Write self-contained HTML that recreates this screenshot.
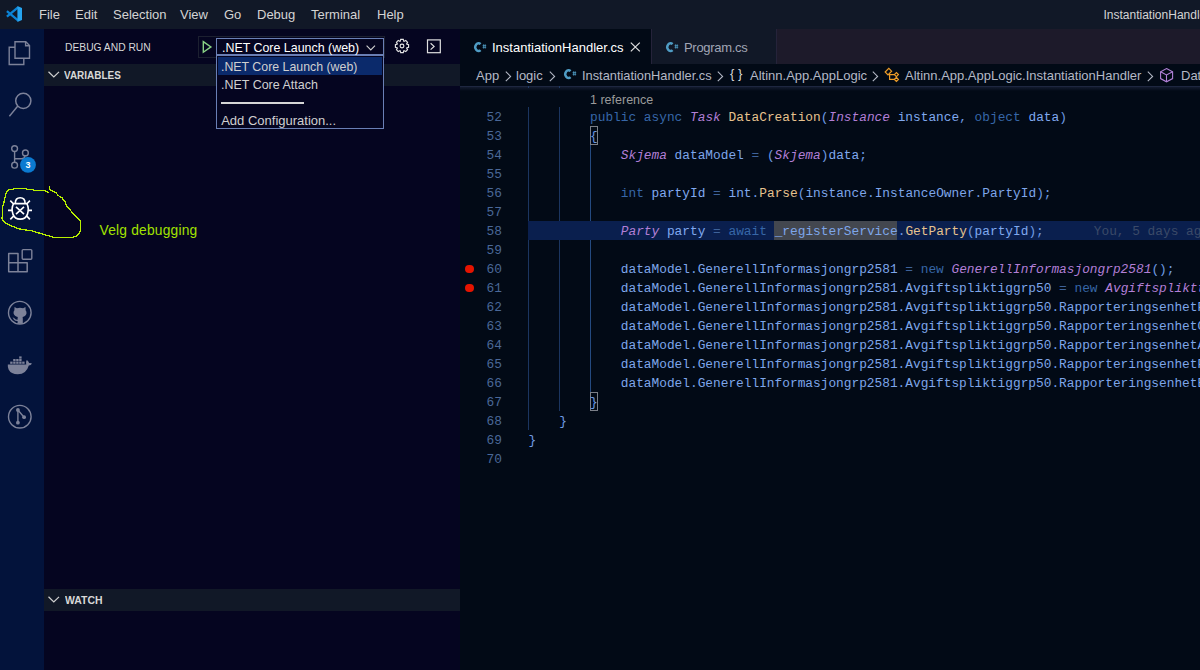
<!DOCTYPE html>
<html><head><meta charset="utf-8">
<style>
*{margin:0;padding:0;box-sizing:border-box}
html,body{width:1200px;height:670px;overflow:hidden;background:#03060f;font-family:"Liberation Sans",sans-serif}
.abs{position:absolute}
svg{position:absolute;overflow:visible}
#title{left:0;top:0;width:1200px;height:29px;background:#111827}
.menu{position:absolute;top:7px;font-size:13px;color:#d4d4d4;line-height:15px;white-space:nowrap}
#act{left:0;top:29px;width:44px;height:641px;background:#03133b}
#side{left:44px;top:29px;width:416px;height:641px;background:#050520}
.sech{position:absolute;left:0;width:416px;height:22px;background:#111827}
.sech span{position:absolute;left:20px;top:5px;font-size:11px;font-weight:bold;color:#d8d8d8;line-height:13px}
#editor{left:460px;top:29px;width:740px;height:641px;background:#020a16;overflow:hidden}
#tabs{left:0;top:0;width:740px;height:35px;background:#1d1a2a}
.tab{position:absolute;top:0;height:35px;font-size:13px;line-height:15px;white-space:nowrap}
#crumbs{left:0;top:35px;width:740px;height:22px;background:#020a16;font-size:13px;color:#b4b9c6;white-space:nowrap}
#crumbs span{position:absolute;top:4px;line-height:15px}
.ddi{position:absolute;left:4.2px;font-size:13px;line-height:15px;color:#d0d0d0;white-space:nowrap}
.ln{position:absolute;margin-top:1px;left:0;width:42px;text-align:right;font-family:"Liberation Mono",monospace;font-size:12.82px;line-height:19px;color:#4a6898;white-space:pre}
.cl{position:absolute;margin-top:1px;left:68.5px;font-family:"Liberation Mono",monospace;font-size:12.82px;line-height:19px;white-space:pre;color:#7ea6ea}
.k{color:#3767a8}
.t{color:#b27fd6;font-style:italic}
.f{color:#e7c38f}
.v{color:#80a9ef}
.p{color:#6f9be2}
.o{color:#3e6299}
.guide{position:absolute;width:1px;background:#1b3560}
</style></head><body>
<div id="title" class="abs">
  <svg style="left:0;top:0" width="30" height="29" viewBox="0 0 30 29"><path d="M6.9 11.1 L18 20.4 M18 7.4 L6.9 16.6" stroke="#0b83d6" stroke-width="2.3"/><path d="M17.4 5.9 L22 7.9 V19.9 L17.4 22 Z" fill="#25a4f0"/></svg>
  <div class="menu" style="left:39px">File</div>
  <div class="menu" style="left:75px">Edit</div>
  <div class="menu" style="left:113px">Selection</div>
  <div class="menu" style="left:180px">View</div>
  <div class="menu" style="left:224px">Go</div>
  <div class="menu" style="left:257px">Debug</div>
  <div class="menu" style="left:311px">Terminal</div>
  <div class="menu" style="left:377px">Help</div>
  <div class="menu" style="left:1103.5px;font-size:12px;top:7.5px">InstantiationHandler.cs - app - Visual Studio Code</div>
</div>

<div id="act" class="abs">
 <svg style="left:0;top:0" width="44" height="641" viewBox="0 29 44 641" fill="none" stroke="#7d8299" stroke-width="1.4">
  <!-- files -->
  <path d="M15 41.8 H25.8 L29.5 45.5 V58.2 H15 Z"/>
  <path d="M25.6 42 V45.7 H29.3"/>
  <path d="M15 47.2 H9.2 V64.5 H23.8 V58.2"/>
  <!-- search -->
  <circle cx="23.3" cy="100.8" r="7.6" stroke-width="1.5"/>
  <path d="M17.8 106 L9.4 116.2"/>
  <!-- scm -->
  <circle cx="14.6" cy="148.6" r="2.9"/>
  <circle cx="25.4" cy="152.9" r="2.9"/>
  <circle cx="14.6" cy="165.2" r="2.9"/>
  <path d="M14.6 151.5 V162.3"/>
  <path d="M25 155.8 Q24.6 158.8 21.6 158.8 H14.6"/>
  <!-- extensions -->
  <path d="M8.7 253.6 H18 V262.8 H27.2 V271.8 H8.7 Z M8.7 262.8 H18 V271.8" stroke-linejoin="round" stroke-width="1.5"/>
  <rect x="22.2" y="249.6" width="9.6" height="9.6" rx="1"/>
  <!-- github -->
  <circle cx="19.8" cy="312.7" r="11.3"/>
  <!-- git graph -->
  <circle cx="19.8" cy="416.7" r="11.3"/>
  <path d="M17.9 410 V422.7 M17.9 410 L24.1 417.2"/>
 </svg>
 <svg style="left:0;top:0" width="44" height="641" viewBox="0 29 44 641">
  <!-- github cat -->
  <path fill="#7d8299" d="M14.4 310.2 L14.5 306.9 L16.9 308.2 Q20 307.3 23.1 308.2 L25.5 306.9 L25.6 310.2 Q26.8 311.6 26.5 313.6 Q25.8 316.6 22.6 317 Q22.8 317.6 22.8 318.6 V323.8 H17.6 V320.9 Q15.2 321 13.8 319.4 Q13.2 318.4 12.5 317.6 Q13.4 317.4 14.3 318.3 Q15.6 319.8 17.6 319.8 V318.6 Q17.6 317.6 17.8 317 Q14.4 316.6 13.6 313.6 Q13.2 311.6 14.4 310.2 Z"/>
  <!-- docker -->
  <path fill="#7d8299" d="M7.8 364.6 H26.3 Q25.9 362.4 26.3 360.4 L27.2 360.3 Q28.6 361.6 29.1 363.1 Q30.8 362.6 32 363.4 Q31 365.2 28.8 365.4 Q26.4 374 17.8 374.2 Q11 374.2 8.6 369.4 Q7.6 367.4 7.8 364.6 Z"/>
  <rect fill="#7d8299" x="10.2" y="361.6" width="2.4" height="2.2"/>
  <rect fill="#7d8299" x="13.2" y="361.6" width="2.4" height="2.2"/>
  <rect fill="#7d8299" x="16.2" y="361.6" width="2.4" height="2.2"/>
  <rect fill="#7d8299" x="19.2" y="361.6" width="2.4" height="2.2"/>
  <rect fill="#7d8299" x="22.2" y="361.6" width="2.4" height="2.2"/>
  <rect fill="#7d8299" x="13.2" y="359" width="2.4" height="2.2"/>
  <rect fill="#7d8299" x="16.2" y="359" width="2.4" height="2.2"/>
  <rect fill="#7d8299" x="19.2" y="359" width="2.4" height="2.2"/>
  <rect fill="#7d8299" x="19.2" y="356.4" width="2.4" height="2.2"/>
  <!-- git graph dots -->
  <circle fill="#7d8299" cx="17.9" cy="410" r="1.9"/>
  <circle fill="#7d8299" cx="24.1" cy="417.2" r="1.9"/>
  <circle fill="#7d8299" cx="17.9" cy="422.7" r="1.9"/>
  <!-- badge -->
  <circle fill="#0b7ad1" cx="28" cy="164.8" r="7.9"/>
  <text x="28.1" y="168.2" fill="#ffffff" font-family="Liberation Sans" font-weight="bold" font-size="9" text-anchor="middle">3</text>
  <!-- debug bug -->
  <g fill="none" stroke="#ffffff" stroke-width="1.6">
   <path d="M15.3 203.4 C15.3 199.6 17.5 197.8 20.2 197.8 C22.9 197.8 25.1 199.6 25.1 203.4"/>
   <path d="M13.6 203.6 H26.8 C28.2 206 28.5 211 27.4 214.4 C26.2 217.6 23.6 219.1 20.2 219.1 C16.8 219.1 14.2 217.6 13 214.4 C11.9 211 12.2 206 13.6 203.6 Z"/>
   <path d="M16 206.8 L24 214.2 M24 206.8 L16 214.2"/>
   <path d="M10.3 200.6 L13.6 204 M29.9 200.6 L26.7 204 M8 210.4 H12.6 M27.8 210.4 H32 M10.3 219.4 L14 215.6 M29.9 219.4 L26.4 215.6"/>
  </g>
 </svg>
</div>

<div id="side" class="abs">
  <div class="abs" style="left:20.5px;top:12px;font-size:11px;color:#d8d8d8;line-height:13px;transform:scaleX(0.935);transform-origin:0 0;white-space:nowrap">DEBUG AND RUN</div>
  <div class="sech" style="top:35px"><span style="transform:scaleX(0.905);transform-origin:0 0">VARIABLES</span>
    <svg style="left:4px;top:7px" width="12" height="7" viewBox="0 0 12 7"><path d="M0.5 0.8 L5.8 6 L11 0.8" fill="none" stroke="#d0d0d0" stroke-width="1.2"/></svg>
  </div>
  <div class="sech" style="top:560px"><span style="left:20.5px;transform:scaleX(0.95);transform-origin:0 0">WATCH</span>
    <svg style="left:4px;top:7px" width="12" height="7" viewBox="0 0 12 7"><path d="M0.5 0.8 L5.8 6 L11 0.8" fill="none" stroke="#d0d0d0" stroke-width="1.2"/></svg>
  </div>
  <!-- debug toolbar -->
  <div class="abs" style="left:154px;top:7px;width:187px;height:22px;border:1px solid #1c2030"></div>
  <svg style="left:154px;top:7px" width="20" height="22" viewBox="0 0 20 22"><path d="M5.3 5.6 L12.9 10.9 L5.3 16.2 Z" fill="none" stroke="#89d185" stroke-width="1.4" stroke-linejoin="miter"/></svg>
  <div class="abs" style="left:172px;top:9px;width:168px;height:17px;border:1px solid #6a7fb5;background:#050520">
    <span class="abs" style="left:4.5px;top:1px;font-size:13px;line-height:15px;color:#ffffff;white-space:nowrap;transform:scaleX(0.955);transform-origin:0 0">.NET Core Launch (web)</span>
    <svg style="left:149px;top:6px" width="10" height="6" viewBox="0 0 10 6"><path d="M0.6 0.6 L4.8 5 L9 0.6" fill="none" stroke="#d0d0d0" stroke-width="1.1"/></svg>
  </div>
  <svg style="left:350.2px;top:8.8px" width="16" height="16" viewBox="0 0 16 16" fill="none" stroke="#e6e6e6" stroke-width="1.15">
   <path d="M6.13 3.36 L6.72 1.42 L9.28 1.42 L9.87 3.36 L9.95 3.40 L11.75 2.45 L13.55 4.25 L12.60 6.05 L12.64 6.13 L14.58 6.72 L14.58 9.28 L12.64 9.87 L12.60 9.95 L13.55 11.75 L11.75 13.55 L9.95 12.60 L9.87 12.64 L9.28 14.58 L6.72 14.58 L6.13 12.64 L6.05 12.60 L4.25 13.55 L2.45 11.75 L3.40 9.95 L3.36 9.87 L1.42 9.28 L1.42 6.72 L3.36 6.13 L3.40 6.05 L2.45 4.25 L4.25 2.45 L6.05 3.40 Z"/>
   <circle cx="8" cy="8" r="1.9"/>
  </svg>
  <svg style="left:382px;top:9px" width="16" height="16" viewBox="0 0 16 16" fill="none" stroke="#e0e0e0" stroke-width="1.2">
   <rect x="1.5" y="1.9" width="12.8" height="12.8"/>
   <path d="M4.6 5.2 L8.1 8.4 L4.6 11.6"/>
  </svg>
  <!-- dropdown -->
  <div class="abs" style="left:172px;top:26px;width:168px;height:74px;border:1px solid #6a7fb5;background:#050520">
    <div class="abs" style="left:1px;top:1px;width:164px;height:18px;background:#0b2a6b"></div>
    <div class="ddi" style="top:2.8px;transform:scaleX(0.95);transform-origin:0 0">.NET Core Launch (web)</div>
    <div class="ddi" style="top:21px;transform:scaleX(0.96);transform-origin:0 0">.NET Core Attach</div>
    <div class="abs" style="left:4px;top:46px;width:83px;height:2px;background:#d6d6d6"></div>
    <div class="ddi" style="top:57px">Add Configuration...</div>
  </div>
  <div class="abs" style="left:55.5px;top:192.5px;font-size:13.8px;line-height:17px;letter-spacing:0.2px;color:#a2e200;white-space:nowrap">Velg debugging</div>
</div>

<div id="editor" class="abs">
  <div id="tabs" class="abs">
    <div class="tab" style="left:0;width:191px;background:#020a16;color:#ffffff">
      <svg style="left:13.5px;top:12.5px" width="13" height="11" viewBox="0 0 13 11"><path d="M6.56 2.11 A3.2 3.9 0 1 0 6.56 8.09" fill="none" stroke="#4f9cc4" stroke-width="2.4"/><path d="M9.6 2.3 V6.6 M11.2 2.3 V6.6 M8.6 3.6 H12.2 M8.6 5.3 H12.2" stroke="#4f9cc4" stroke-width="0.8"/></svg>
      <span class="abs" style="left:32px;top:11px">InstantiationHandler.cs</span>
      <svg style="left:170px;top:13px" width="11" height="10" viewBox="0 0 11 10"><path d="M0.8 0.6 L9.8 9.4 M9.8 0.6 L0.8 9.4" stroke="#e0e0e0" stroke-width="1.2"/></svg>
    </div>
    <div class="tab" style="left:191px;width:126px;background:#111827;border-left:1px solid #25233a;border-right:1px solid #25233a;color:#a0a5b4">
      <svg style="left:13.5px;top:12.5px" width="13" height="11" viewBox="0 0 13 11"><path d="M6.56 2.11 A3.2 3.9 0 1 0 6.56 8.09" fill="none" stroke="#4f9cc4" stroke-width="2.4"/><path d="M9.6 2.3 V6.6 M11.2 2.3 V6.6 M8.6 3.6 H12.2 M8.6 5.3 H12.2" stroke="#4f9cc4" stroke-width="0.8"/></svg>
      <span class="abs" style="left:32px;top:11px;letter-spacing:-0.3px">Program.cs</span>
    </div>
  </div>
  <div class="guide" style="left:68px;top:57px;height:2px"></div>
  <div class="guide" style="left:99px;top:57px;height:2px"></div>
  <div class="guide" style="left:68px;top:78px;height:323px"></div>
  <div class="guide" style="left:99px;top:78px;height:304px"></div>
  <div class="guide" style="left:130px;top:116px;height:247px;background:#244a80"></div>
  <div class="abs" style="left:68px;top:192px;width:672px;height:19px;background:#0a1f4e"></div>
  <div class="abs" style="left:314px;top:192px;width:123px;height:19px;background:#43474f"></div>
  <div class="abs" style="left:130px;top:97px;width:8px;height:19px;border:1px solid #7b7f88"></div>
  <div class="abs" style="left:130px;top:363px;width:8px;height:19px;border:1px solid #7b7f88"></div>
  <div class="abs" style="left:5.4px;top:235.6px;width:8.6px;height:8.6px;border-radius:50%;background:#e51400"></div>
  <div class="abs" style="left:5.4px;top:254.6px;width:8.6px;height:8.6px;border-radius:50%;background:#e51400"></div>
  <div class="abs" style="left:130px;top:64px;font-size:12.5px;line-height:14px;color:#9a9a9a;white-space:nowrap">1 reference</div>
  <div class="ln" style="top:78px">52</div>
  <div class="cl" style="top:78px">        <span class="k">public</span> <span class="k">async</span> <span class="t">Task</span> <span class="f">DataCreation</span><span class="p">(</span><span class="t">Instance</span> <span class="v">instance</span><span class="p">,</span> <span class="k">object</span> <span class="v">data</span><span class="p">)</span></div>
  <div class="ln" style="top:97px">53</div>
  <div class="cl" style="top:97px">        <span class="p">{</span></div>
  <div class="ln" style="top:116px">54</div>
  <div class="cl" style="top:116px">            <span class="t">Skjema</span> dataModel <span class="o">=</span> <span class="p">(</span><span class="t">Skjema</span><span class="p">)</span><span class="v">data</span><span class="p">;</span></div>
  <div class="ln" style="top:135px">55</div>
  <div class="ln" style="top:154px">56</div>
  <div class="cl" style="top:154px">            <span class="k">int</span> <span class="v">partyId</span> <span class="o">=</span> <span class="v">int</span><span class="p">.</span><span class="f">Parse</span><span class="p">(</span>instance<span class="p">.</span>InstanceOwner<span class="p">.</span>PartyId<span class="p">);</span></div>
  <div class="ln" style="top:173px">57</div>
  <div class="ln" style="top:192px">58</div>
  <div class="cl" style="top:192px">            <span class="t">Party</span> <span class="v">party</span> <span class="o">=</span> <span class="k">await</span> <span>_registerService</span><span class="p">.</span><span class="f">GetParty</span><span class="p">(</span><span class="v">partyId</span><span class="p">);</span></div>
  <div class="ln" style="top:211px">59</div>
  <div class="ln" style="top:230px">60</div>
  <div class="cl" style="top:230px">            dataModel<span class="p">.</span>GenerellInformasjongrp2581 <span class="o">=</span> <span class="k">new</span> <span class="t">GenerellInformasjongrp2581</span><span class="p">();</span></div>
  <div class="ln" style="top:249px">61</div>
  <div class="cl" style="top:249px">            dataModel<span class="p">.</span>GenerellInformasjongrp2581<span class="p">.</span>Avgiftspliktiggrp50 <span class="o">=</span> <span class="k">new</span> <span class="t">Avgiftsplikttiggrp50</span><span class="p">();</span></div>
  <div class="ln" style="top:268px">62</div>
  <div class="cl" style="top:268px">            dataModel<span class="p">.</span>GenerellInformasjongrp2581<span class="p">.</span>Avgiftspliktiggrp50<span class="p">.</span>RapporteringsenhetPostnummer</div>
  <div class="ln" style="top:287px">63</div>
  <div class="cl" style="top:287px">            dataModel<span class="p">.</span>GenerellInformasjongrp2581<span class="p">.</span>Avgiftspliktiggrp50<span class="p">.</span>RapporteringsenhetOrganisasjonsnummer</div>
  <div class="ln" style="top:306px">64</div>
  <div class="cl" style="top:306px">            dataModel<span class="p">.</span>GenerellInformasjongrp2581<span class="p">.</span>Avgiftspliktiggrp50<span class="p">.</span>RapporteringsenhetAdresse</div>
  <div class="ln" style="top:325px">65</div>
  <div class="cl" style="top:325px">            dataModel<span class="p">.</span>GenerellInformasjongrp2581<span class="p">.</span>Avgiftspliktiggrp50<span class="p">.</span>RapporteringsenhetPoststed</div>
  <div class="ln" style="top:344px">66</div>
  <div class="cl" style="top:344px">            dataModel<span class="p">.</span>GenerellInformasjongrp2581<span class="p">.</span>Avgiftspliktiggrp50<span class="p">.</span>RapporteringsenhetEpost</div>
  <div class="ln" style="top:363px">67</div>
  <div class="cl" style="top:363px">        <span class="p">}</span></div>
  <div class="ln" style="top:382px">68</div>
  <div class="cl" style="top:382px">    <span class="p">}</span></div>
  <div class="ln" style="top:401px">69</div>
  <div class="cl" style="top:401px"><span class="p">}</span></div>
  <div class="ln" style="top:420px">70</div>
  <div class="cl" style="top:192px;left:633.75px;color:#3b4a68">You, 5 days ago</div>
  <div id="crumbs" class="abs">
    <span style="left:16px">App</span>
    <svg style="left:45px;top:6.5px" width="7" height="11" viewBox="0 0 7 11"><path d="M0.8 0.6 L5.6 5.4 L0.8 10.2" fill="none" stroke="#b4b9c6" stroke-width="1.1"/></svg>
    <span style="left:56px">logic</span>
    <svg style="left:88.5px;top:6.5px" width="7" height="11" viewBox="0 0 7 11"><path d="M0.8 0.6 L5.6 5.4 L0.8 10.2" fill="none" stroke="#b4b9c6" stroke-width="1.1"/></svg>
    <svg style="left:103.5px;top:5px" width="13" height="11" viewBox="0 0 13 11"><path d="M6.56 2.11 A3.2 3.9 0 1 0 6.56 8.09" fill="none" stroke="#4f9cc4" stroke-width="2.4"/><path d="M9.6 2.3 V6.6 M11.2 2.3 V6.6 M8.6 3.6 H12.2 M8.6 5.3 H12.2" stroke="#4f9cc4" stroke-width="0.8"/></svg>
    <span style="left:122px;transform:scaleX(0.985);transform-origin:0 0">InstantiationHandler.cs</span>
    <svg style="left:257.3px;top:6.5px" width="7" height="11" viewBox="0 0 7 11"><path d="M0.8 0.6 L5.6 5.4 L0.8 10.2" fill="none" stroke="#b4b9c6" stroke-width="1.1"/></svg>
    <span style="left:270px;top:2px;color:#d8d8d8">{ }</span>
    <span style="left:290px">Altinn.App.AppLogic</span>
    <svg style="left:412.2px;top:6.5px" width="7" height="11" viewBox="0 0 7 11"><path d="M0.8 0.6 L5.6 5.4 L0.8 10.2" fill="none" stroke="#b4b9c6" stroke-width="1.1"/></svg>
    <svg style="left:424px;top:3px" width="16" height="15" viewBox="0 0 16 15" fill="none" stroke="#ee9d28" stroke-width="1.2">
      <path d="M1.2 5 L4.8 1.4 L7.6 4.2 L4 7.8 Z"/>
      <path d="M5.6 6.4 V12.4 H10.6 M5.6 7.6 H10.6"/>
      <path d="M10.4 7.6 L12.4 5.6 L14.4 7.6 L12.4 9.6 Z"/>
      <path d="M10.4 12.4 L12.4 10.4 L14.4 12.4 L12.4 14.4 Z"/>
    </svg>
    <span style="left:445px">Altinn.App.AppLogic.InstantiationHandler</span>
    <svg style="left:687.2px;top:6.5px" width="7" height="11" viewBox="0 0 7 11"><path d="M0.8 0.6 L5.6 5.4 L0.8 10.2" fill="none" stroke="#b4b9c6" stroke-width="1.1"/></svg>
    <svg style="left:700px;top:4px" width="14" height="15" viewBox="0 0 14 15" fill="none" stroke="#b180d7" stroke-width="1.1">
      <path d="M6.5 0.6 L12.6 3.8 V10.6 L6.5 13.8 L0.6 10.6 V3.8 Z"/>
      <path d="M0.6 3.8 L6.5 7 L12.6 3.8 M6.5 7 V13.8"/>
    </svg>
    <span style="left:721px">DataCreation</span>
  </div>
  <div class="abs" style="left:0;top:57px;width:740px;height:5px;background:linear-gradient(#1e2740 0px,#1e2740 1px,#131b2f 1px,#0a1222 3px,rgba(2,10,22,0) 5px)"></div>
  <div class="guide" style="left:68px;top:57px;height:2px;background:#1d3a66"></div>
  <div class="guide" style="left:99px;top:57px;height:2px;background:#1d3a66"></div>
</div>
<svg style="left:0;top:0" width="1200" height="670" viewBox="0 0 1200 670"><path d="M49.3 187 L49.5 189.7 L52.9 191.2 L55.8 192.6 L58.2 195.5 L62.1 197.9 L65 201.8 L66.4 205.7 L69.8 209.1 L72.7 213.5 L76.6 217.3 L80.5 221.2 L80.7 229.5 L79 233.8 L76.6 236.3 L72.7 237.2 L55.3 237.7 L50.4 236.3 L41.7 233.8 L32 230.9 L19.4 229 L10.7 225.6 L4.8 222.7 L2.1 218.8 L2.4 208.1 L4.4 200.4 L6.3 192.1 L9.2 189.7 L13.1 189.2 L13.6 188.2 L26.2 188.2 L26.7 189.2 L33.5 189.7 L33.9 190.2 L44.6 190.5 L48.5 192.6" fill="none" stroke="#b8f000" stroke-width="1.3" stroke-linejoin="round" stroke-linecap="round" shape-rendering="crispEdges"/></svg>
</body></html>
